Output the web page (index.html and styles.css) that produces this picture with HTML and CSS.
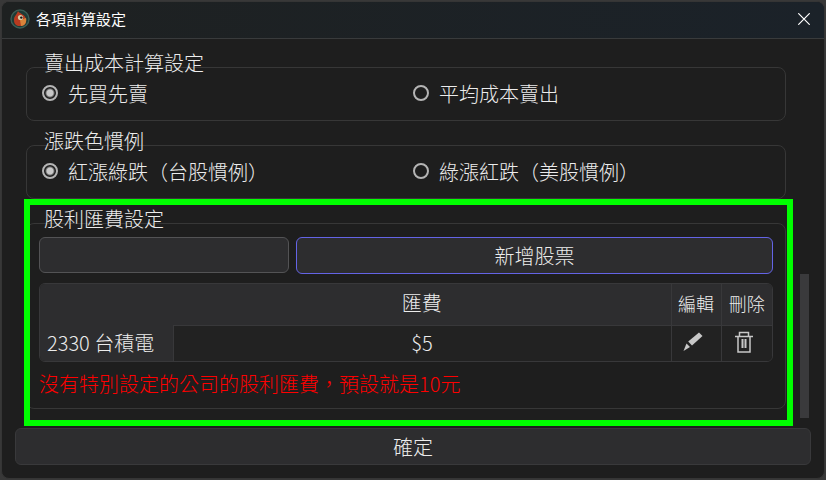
FILE: index.html
```html
<!DOCTYPE html>
<html lang="zh-TW">
<head>
  <meta charset="UTF-8">
  <meta name="viewport" content="width=device-width, initial-scale=1.0">
  <title>各項計算設定</title>
  <link rel="stylesheet" href="styles.css">
</head>
<body>
  <div class="window">
    <header class="titlebar">
      <svg class="logo" viewBox="0 0 20 20" aria-hidden="true">
        <circle cx="10" cy="10" r="9" fill="#1d3b36" stroke="#3b5d55" stroke-width="1.4"/>
        <path d="M4 11C4 7 6 7 8 2c1 3 8 3 8 9 0 4-2 6-6 6s-6-2-6-6z" fill="#b63b20"/>
        <path d="M10 11l6-2c1 4-1 8-5 8z" fill="#d8843a"/>
        <circle cx="10.500" cy="8.500" r="2.600" fill="#d9c9a4"/>
        <circle cx="11.300" cy="8.600" r="1.200" fill="#1a1a1a"/>
      </svg>
      <h1 class="title">各項計算設定</h1>
      <button class="close" type="button" aria-label="關閉">
        <svg viewBox="0 0 12 12" width="12" height="12" fill="none" stroke="#fff" stroke-width="1.2">
          <path d="M0.3 0.3L11.7 11.7M11.7 0.3L0.3 11.7"/>
        </svg>
      </button>
    </header>

    <form class="content">
      <div class="scroll-area">
        <div class="groups">
          <fieldset class="group">
            <legend>賣出成本計算設定</legend>
            <div class="options">
              <label><input type="radio" name="cost" checked>先買先賣</label>
              <label><input type="radio" name="cost">平均成本賣出</label>
            </div>
          </fieldset>

          <fieldset class="group">
            <legend>漲跌色慣例</legend>
            <div class="options">
              <label><input type="radio" name="color" checked>紅漲綠跌（台股慣例）</label>
              <label><input type="radio" name="color">綠漲紅跌（美股慣例）</label>
            </div>
          </fieldset>

          <fieldset class="group">
            <legend>股利匯費設定</legend>
            <div class="fee">
              <div class="add-row">
                <input class="stock-input" type="text" aria-label="股票">
                <button class="btn add" type="button">新增股票</button>
              </div>
              <div class="table-wrap">
                <table>
                  <thead>
                    <tr>
                      <td class="name"></td>
                      <th>匯費</th>
                      <th class="action">編輯</th>
                      <th class="action">刪除</th>
                    </tr>
                  </thead>
                  <tbody>
                    <tr>
                      <th class="name" scope="row">2330 台積電</th>
                      <td>$5</td>
                      <td>
                        <button class="icon-btn" type="button" aria-label="編輯">
                          <svg viewBox="0 0 24 24" width="24" height="24" fill="#c8c8c8">
                            <path d="M18 2.500l3.500 3.500-10.500 9.500-3.800-4z"/>
                            <path d="M5.500 13.500l3.500 3.500-6.500 4z"/>
                          </svg>
                        </button>
                      </td>
                      <td>
                        <button class="icon-btn" type="button" aria-label="刪除">
                          <svg viewBox="0 0 24 24" width="24" height="24" fill="none" stroke="#c8c8c8">
                            <path stroke-width="1.500" d="M3 6.500h18M7.500 6V2.500h9V6M6 6.500V22h12V6.500"/>
                            <path stroke-width="2" d="M10.500 9v9M13.500 9v9"/>
                          </svg>
                        </button>
                      </td>
                    </tr>
                  </tbody>
                </table>
              </div>
              <p class="note">沒有特別設定的公司的股利匯費，預設就是10元</p>
            </div>
          </fieldset>
          <div class="highlight"></div>
        </div>
        <div class="scrollbar"><div class="thumb"></div></div>
      </div>
      <button class="btn confirm" type="button">確定</button>
    </form>
  </div>
</body>
</html>
```
FILE: styles.css
```css
* {
  box-sizing: border-box;
}

body {
  margin: 0;
  padding: 1px;
  min-height: 100vh;
  display: flex;
  background-color: #383838;
  color: #ececec;
  font-family: "Noto Sans CJK TC", sans-serif;
  font-size: 20px;
  font-weight: 300;
  line-height: 24px;
}

button, input {
  font: inherit;
  color: inherit;
}

.window {
  flex: 1;
  display: flex;
  flex-direction: column;
  border: 1px solid #353535;
  border-radius: 8px;
  background-color: #1e1e1e;
  overflow: hidden;
}

.titlebar {
  display: flex;
  align-items: center;
  gap: 6px;
  height: 37px;
  padding: 0 8px 2px;
  border-bottom: 1px solid #393b3c;
  background: linear-gradient(to right, #1e2121, #1b2229);
}

.logo {
  width: 20px;
  height: 20px;
}

.title {
  flex: 1;
  margin: 0;
  font-size: 15px;
  font-weight: 400;
  color: #fff;
}

.close {
  display: flex;
  padding: 6px;
  border: 0;
  background: none;
}

.content {
  flex: 1;
  display: flex;
  flex-direction: column;
  padding: 12px 13px 13px;
}

.scroll-area {
  flex: 1;
  display: flex;
  gap: 14px;
  padding-left: 11px;
}

.groups {
  position: relative;
  flex: 1;
  display: flex;
  flex-direction: column;
  gap: 8px;
}

.group {
  min-width: 0;
  margin: 0;
  padding: 0;
  border: 0;
}

.group legend {
  height: 16px;
  margin-left: 18px;
  padding: 0;
}

.options, .fee {
  border: 1px solid #373737;
  border-radius: 8px;
}

.options {
  display: grid;
  grid-template-columns: 1fr 1fr;
  padding: 14px 15px;
}

.options label {
  display: flex;
  align-items: center;
  gap: 10px;
}

.options label + label {
  padding-left: 7px;
}

input[type="radio"] {
  appearance: none;
  width: 16px;
  height: 16px;
  margin: 0 0 2px;
  border: 2px solid #b4b4b4;
  border-radius: 50%;
}

input[type="radio"]:checked {
  background: radial-gradient(circle, #c8c8c8 3px, #1e1e1e 5px);
}

.fee {
  padding: 13px 12px 12px;
}

.add-row {
  display: grid;
  grid-template-columns: 250px 1fr;
  gap: 7px;
}

.stock-input {
  min-width: 0;
  height: 36px;
  padding: 0 8px;
  border: 1px solid #535355;
  border-radius: 6px;
  background-color: #2d2d2f;
}

.btn {
  height: 37px;
  padding: 0;
  border: 1px solid #39393b;
  border-radius: 6px;
  background-color: #2d2d2f;
}

.btn.add {
  border-color: #6464e6;
}

.table-wrap {
  margin-top: 9px;
  border: 1px solid #38383a;
  border-radius: 6px;
  overflow: hidden;
}

table {
  width: 100%;
  table-layout: fixed;
  border-collapse: collapse;
  text-align: center;
}

th, td {
  height: 36px;
  padding: 0;
  border-left: 1px solid #38383a;
  background-color: #222;
  font-weight: 300;
}

thead th, thead td {
  height: 41px;
  padding-bottom: 2px;
  border-bottom: 1px solid #38383a;
  background-color: #2d2d2f;
}

thead th:nth-child(2) {
  border-left: 0;
}

.name {
  width: 133px;
  padding-left: 7px;
  border: 0;
  background-color: #2d2d2f;
  text-align: left;
}

thead .name {
  border-color: #2d2d2f;
}

.action {
  width: 50px;
  font-size: 18px;
}

.action:last-child {
  width: 51px;
}

.icon-btn {
  display: inline-flex;
  padding: 0 6px 4px 0;
  border: 0;
  background: none;
  vertical-align: middle;
}

.note {
  margin: 10px 0 0;
  color: #f00;
}

/* green frame over the fee section */
.highlight {
  position: absolute;
  left: -2px;
  right: -7px;
  bottom: 2px;
  height: 227px;
  border: 6px solid #0f0;
}

.scrollbar {
  width: 11px;
  display: flex;
  flex-direction: column;
  justify-content: flex-end;
  padding: 0 2px 10px 0;
}

.thumb {
  height: 144px;
  background-color: #3a3a3c;
}

.confirm {
  width: 100%;
}
```
